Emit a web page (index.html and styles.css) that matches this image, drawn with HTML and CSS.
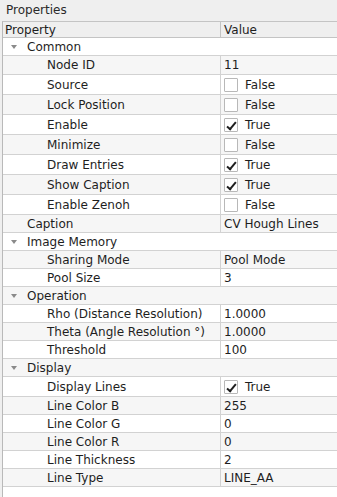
FILE: index.html
```html
<!DOCTYPE html>
<html lang="en">
<head>
<meta charset="UTF-8">
<meta name="viewport" content="width=device-width, initial-scale=1.0">
<title>Properties</title>
<link rel="stylesheet" href="styles.css">
</head>
<body>
<div class="panel">
    <div class="title">Properties</div>
    <div class="tree">
        <div class="row head">
            <div class="name">Property</div>
            <div class="value">Value</div>
        </div>

        <div class="row group">
            <div class="name lv0"><span class="arrow"></span>Common</div>
        </div>
        <div class="row alt tall19">
            <div class="name lv1">Node ID</div>
            <div class="value">11</div>
        </div>
        <div class="row tall">
            <div class="name lv1">Source</div>
            <div class="value"><span class="check"></span>False</div>
        </div>
        <div class="row alt tall">
            <div class="name lv1">Lock Position</div>
            <div class="value"><span class="check"></span>False</div>
        </div>
        <div class="row tall">
            <div class="name lv1">Enable</div>
            <div class="value"><span class="check on"></span>True</div>
        </div>
        <div class="row alt tall">
            <div class="name lv1">Minimize</div>
            <div class="value"><span class="check"></span>False</div>
        </div>
        <div class="row tall">
            <div class="name lv1">Draw Entries</div>
            <div class="value"><span class="check on"></span>True</div>
        </div>
        <div class="row alt tall">
            <div class="name lv1">Show Caption</div>
            <div class="value"><span class="check on"></span>True</div>
        </div>
        <div class="row tall">
            <div class="name lv1">Enable Zenoh</div>
            <div class="value"><span class="check"></span>False</div>
        </div>
        <div class="row alt">
            <div class="name lv0">Caption</div>
            <div class="value">CV Hough Lines</div>
        </div>

        <div class="row group">
            <div class="name lv0"><span class="arrow"></span>Image Memory</div>
        </div>
        <div class="row alt">
            <div class="name lv1">Sharing Mode</div>
            <div class="value">Pool Mode</div>
        </div>
        <div class="row">
            <div class="name lv1">Pool Size</div>
            <div class="value">3</div>
        </div>

        <div class="row group alt">
            <div class="name lv0"><span class="arrow"></span>Operation</div>
        </div>
        <div class="row">
            <div class="name lv1">Rho (Distance Resolution)</div>
            <div class="value">1.0000</div>
        </div>
        <div class="row alt">
            <div class="name lv1">Theta (Angle Resolution °)</div>
            <div class="value">1.0000</div>
        </div>
        <div class="row">
            <div class="name lv1">Threshold</div>
            <div class="value">100</div>
        </div>

        <div class="row group alt">
            <div class="name lv0"><span class="arrow"></span>Display</div>
        </div>
        <div class="row tall">
            <div class="name lv1">Display Lines</div>
            <div class="value"><span class="check on"></span>True</div>
        </div>
        <div class="row alt">
            <div class="name lv1">Line Color B</div>
            <div class="value">255</div>
        </div>
        <div class="row">
            <div class="name lv1">Line Color G</div>
            <div class="value">0</div>
        </div>
        <div class="row alt">
            <div class="name lv1">Line Color R</div>
            <div class="value">0</div>
        </div>
        <div class="row">
            <div class="name lv1">Line Thickness</div>
            <div class="value">2</div>
        </div>
        <div class="row alt">
            <div class="name lv1">Line Type</div>
            <div class="value">LINE_AA</div>
        </div>
    </div>
</div>
</body>
</html>
```

FILE: styles.css
```css
* {
    margin: 0;
    padding: 0;
    box-sizing: border-box;
}
body {
    width: 337px;
    height: 497px;
    overflow: hidden;
    background-color: #efefef;
    color: #1e1e1e;
    font-family: 'DejaVu Sans', sans-serif;
    font-size: 12px;
}
.panel {
    display: flex;
    flex-direction: column;
    height: 497px;
}
.title {
    height: 21px;
    line-height: 21px;
    padding-left: 6px;
    color: #2a2a2a;
}
.tree {
    flex: 1;
    margin-left: 2px;
    background: #ffffff;
    border-left: 1px solid #b9b9b9;
    border-top: 1px solid #c4c4c4;
}
.row {
    display: grid;
    grid-template-columns: 218px 1fr;
    height: 18px;
    border-bottom: 1px solid #d2d2d2;
    background: #ffffff;
    white-space: nowrap;
}
.row.alt {
    background: #f6f6f6;
}
.row.tall {
    height: 20px;
}
.row.tall19 {
    height: 19px;
}
.row.head {
    height: 16px;
    background: #efefef;
    border-bottom: 1px solid #c4c4c4;
}
.row.group {
    grid-template-columns: 1fr;
}
.name, .value {
    display: flex;
    align-items: center;
    overflow: hidden;
}
.name {
    border-right: 1px solid #d2d2d2;
    padding-left: 2px;
}
.row.group .name {
    border-right: none;
}
.head .name {
    border-right-color: #c4c4c4;
}
.value {
    padding-left: 3px;
}
.lv0 {
    padding-left: 24px;
    position: relative;
}
.lv1 {
    padding-left: 44px;
}
.arrow {
    position: absolute;
    left: 8px;
    top: 7px;
    width: 0;
    height: 0;
    border-left: 3px solid transparent;
    border-right: 3px solid transparent;
    border-top: 4px solid #8a8a8a;
}
.check {
    width: 14px;
    height: 14px;
    margin-right: 7px;
    border: 1px solid #b8b8b8;
    border-radius: 1px;
    background: #ffffff;
    position: relative;
    flex-shrink: 0;
}
.check.on::after {
    content: "";
    position: absolute;
    left: 4px;
    top: 1px;
    width: 3px;
    height: 8px;
    border-right: 2px solid #1e1e1e;
    border-bottom: 2px solid #1e1e1e;
    transform: rotate(40deg);
}
```
